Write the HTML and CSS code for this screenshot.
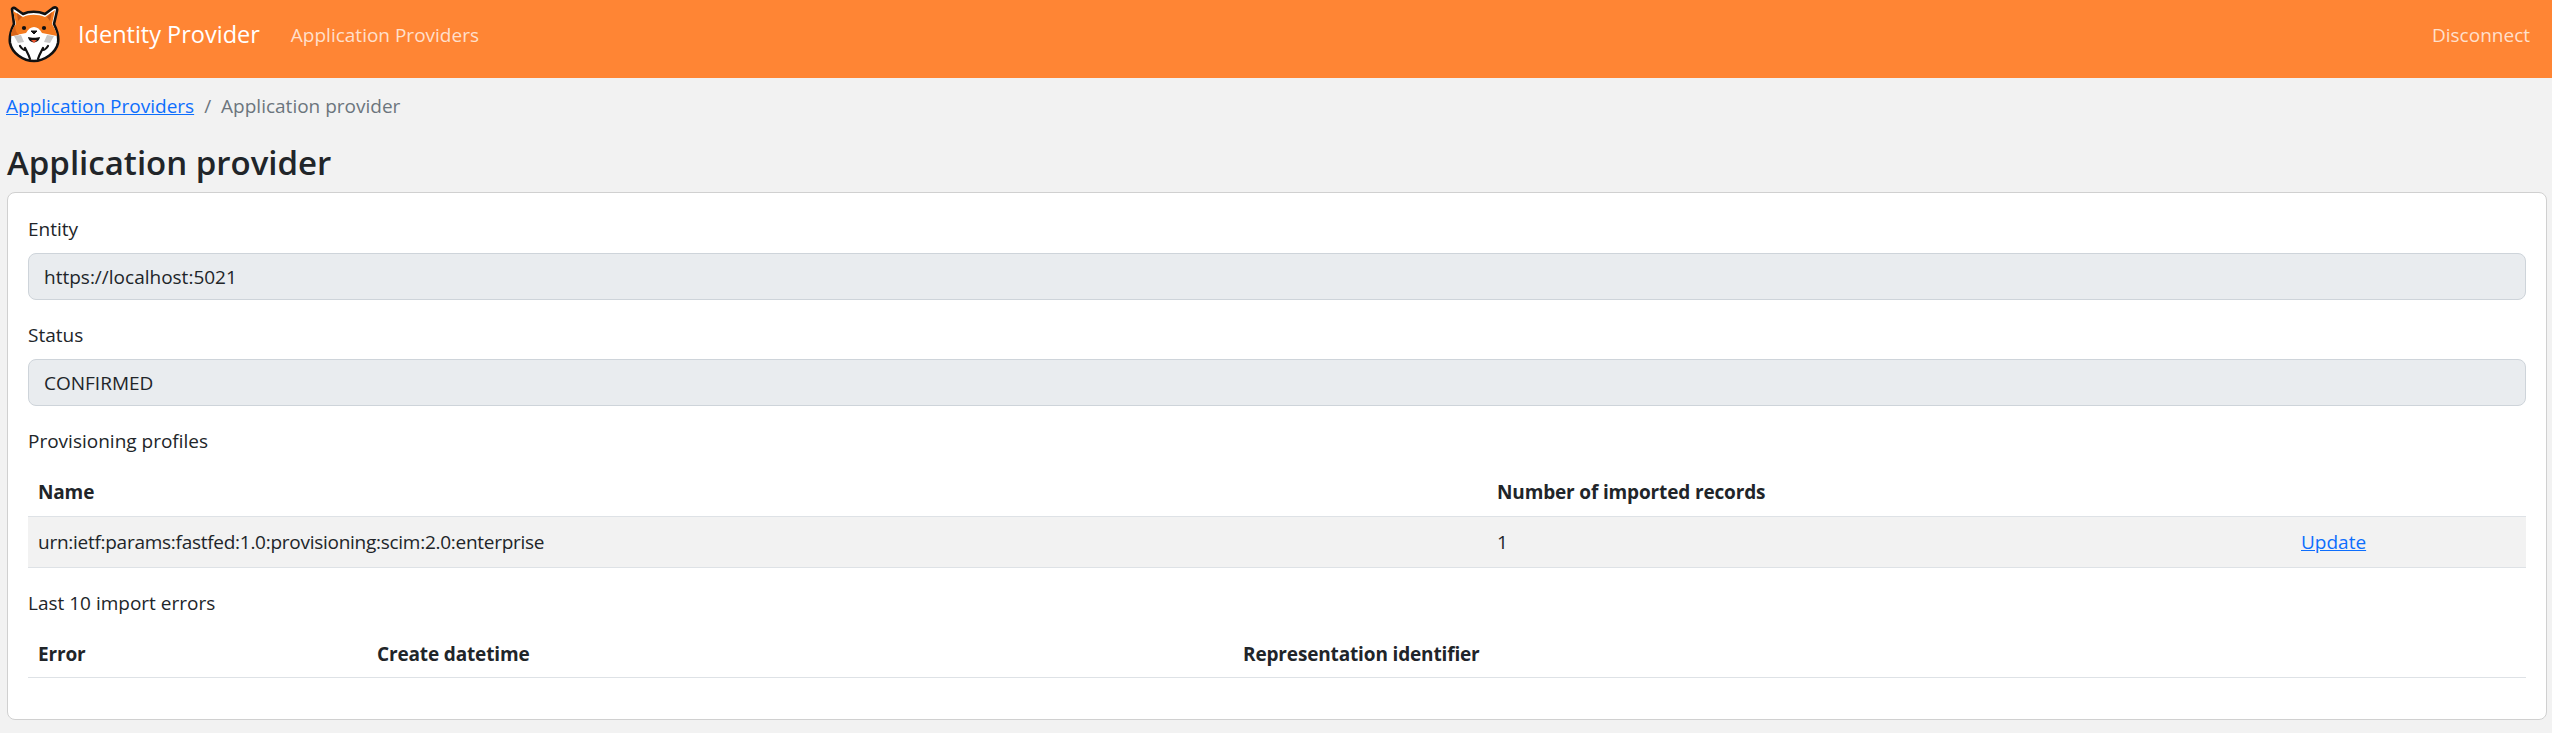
FILE: index.html
```html
<!DOCTYPE html>
<html lang="en">
<head>
<meta charset="utf-8">
<title>Application provider</title>
<link rel="stylesheet" href="styles.css">
</head>
<body>
<nav class="navbar">
  <svg class="logo" viewBox="8 6 52 58" aria-hidden="true">
    <path d="M12 9 C13 7 15 8 16 9 L23 14 C29 11 38 11 45 14 L53 8 C55 7 58 7 57 11 L54 24 C57 30 59 37 58 43 C56 53 44 61 34 61 C23 61 12 53 10 43 C9 36 11 30 14 24 Z" fill="#fff" stroke="#111" stroke-width="2.6" stroke-linejoin="round"/>
    <path d="M13 11 L23 17 C29 14 38 14 45 17 L55 10 L52 24 C55 29 57 33 57 36 C52 35 47 34 42 33 C40 29 37 27 34 27 C31 27 28 29 26 33 C21 34 16 35 11 36 C11 32 13 28 16 24 Z" fill="#f47a1f"/>
    <path d="M11 36 C11 32 13 28 15 25 C15 29 16 33 19 35 Z" fill="#d9651a"/>
    <path d="M17 13 L22 17 L18 21 Z M52 12 L47 17 L50 21 Z" fill="#c4581a"/>
    <path d="M14 36 L21 35 L24 42 L18 43 Z M54 36 L47 35 L44 42 L50 43 Z" fill="#c8c8c8"/>
    <circle cx="24" cy="28" r="2.1" fill="#111"/>
    <circle cx="44" cy="28" r="2.1" fill="#111"/>
    <path d="M31 31 H37 L34 34 Z" fill="#111" stroke="#111" stroke-linejoin="round"/>
    <path d="M28 37 C31 38 37 38 40 37 C39 44 29 44 28 37 Z" fill="#111"/>
    <path d="M31 40 H37 L34 43 Z" fill="#e8542f"/>
    <path d="M25 48 C27 52 29 55 30 59 M43 48 C41 52 39 55 38 59 M20 46 C22 49 24 50 25 50 M48 46 C46 49 44 50 43 50" fill="none" stroke="#111" stroke-width="2.2" stroke-linecap="round"/>
  </svg>
  <a class="brand" href="#">Identity Provider</a>
  <a class="nav-link" href="#">Application Providers</a>
  <a class="nav-link nav-end" href="#">Disconnect</a>
</nav>
<main class="content">
  <ol class="breadcrumb">
    <li><a href="#">Application Providers</a></li>
    <li class="sep">/</li>
    <li class="current">Application provider</li>
  </ol>
  <h1 class="title">Application provider</h1>
  <section class="card">
    <div class="field">
      <label class="label">Entity</label>
      <div class="input">https://localhost:5021</div>
    </div>
    <div class="field">
      <label class="label">Status</label>
      <div class="input">CONFIRMED</div>
    </div>
    <div class="label">Provisioning profiles</div>
    <table class="table table-profiles">
      <thead>
        <tr><th class="c-name">Name</th><th class="c-count">Number of imported records</th><th></th></tr>
      </thead>
      <tbody>
        <tr class="striped"><td class="urn">urn:ietf:params:fastfed:1.0:provisioning:scim:2.0:enterprise</td><td>1</td><td><a href="#">Update</a></td></tr>
      </tbody>
    </table>
    <div class="label">Last 10 import errors</div>
    <table class="table table-errors">
      <thead>
        <tr><th class="c-error">Error</th><th class="c-date">Create datetime</th><th>Representation identifier</th></tr>
      </thead>
    </table>
  </section>
</main>
</body>
</html>
```
FILE: styles.css
```css
* { box-sizing: border-box; }
html, body { margin: 0; padding: 0; }
body {
  background: #f2f2f2;
  color: #212529;
  font-family: "Open Sans", "Noto Sans", sans-serif;
  font-size: 19px;
  line-height: 26px;
}
a { color: #0d6efd; }
.navbar {
  display: flex;
  align-items: center;
  height: 78px;
  background: #ff8534;
  padding: 0 22px 0 8px;
}
.logo { width: 52px; height: 58px; flex: none; margin-bottom: 9px; }
.brand {
  margin-left: 18px;
  margin-bottom: 10px;
  color: #fff;
  font-size: 23.5px;
  line-height: 32px;
  text-decoration: none;
}
.nav-link {
  margin-left: 31px;
  margin-bottom: 8px;
  color: rgba(255,255,255,.75);
  text-decoration: none;
}
.nav-end { margin-left: auto; }
.content { padding: 0 5px 0 7px; }
.breadcrumb {
  display: flex;
  gap: 10px;
  list-style: none;
  margin: 0 0 0 -1px;
  padding: 15px 0 0;
  height: 43px;
}
.sep, .current { color: #6c757d; }
.title {
  margin: 21px 0 0;
  height: 50px;
  font-size: 33px;
  line-height: 42px;
  font-weight: 600;
}
.card {
  height: 528px;
  background: #fff;
  border: 1px solid #d0d0d0;
  border-radius: 8px;
  padding: 23px 20px 0;
}
.field { height: 106px; }
.label { display: block; height: 37px; }
.input {
  height: 47px;
  padding: 10px 15px;
  background: #e9ecef;
  border: 1px solid #ced4da;
  border-radius: 8px;
}
.table {
  width: 100%;
  border-collapse: collapse;
  table-layout: fixed;
}
.table th, .table td {
  text-align: left;
  padding: 0 10px;
  border-bottom: 1px solid #dee2e6;
}
.table th { height: 51px; padding-top: 4px; font-weight: 700; letter-spacing: -0.15px; }
.table td { height: 51px; padding-top: 1px; }
.urn { letter-spacing: -0.27px; }
.striped { background: #f2f2f2; }
.table-profiles { margin-bottom: 22px; }
.c-name { width: 1459px; }
.c-count { width: 804px; }
.c-error { width: 339px; }
.c-date { width: 866px; }
```
